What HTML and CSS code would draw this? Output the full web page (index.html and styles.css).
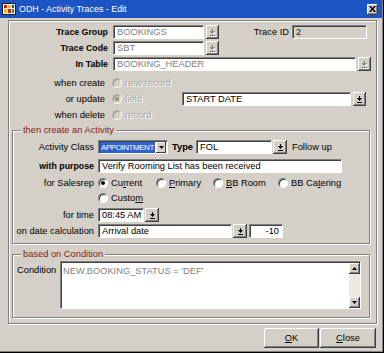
FILE: index.html
```html
<!DOCTYPE html>
<html lang="en">

<head>
    <meta charset="UTF-8">
    <title>ODH - Activity Traces - Edit</title>
    <link rel="stylesheet" href="styles.css">
</head>

<body>
    <div class="window">
        <div class="titlebar">
            <svg class="appicon" width="14" height="14" viewBox="0 0 14 14">
                <rect x="0.5" y="1.5" width="13" height="11" fill="#f4f0e0" stroke="#202020"/>
                <rect x="2" y="3" width="3" height="3" fill="#d02020"/>
                <rect x="6" y="3" width="3" height="3" fill="#f0c020"/>
                <rect x="10" y="3" width="2" height="3" fill="#2040a0"/>
                <rect x="2" y="7" width="3" height="4" fill="#f0c020"/>
                <rect x="6" y="7" width="3" height="4" fill="#d02020"/>
                <rect x="10" y="7" width="2" height="4" fill="#30a030"/>
            </svg>
            <span class="title">ODH - Activity Traces - Edit</span>
            <span class="close-btn">
                <svg width="7" height="6" viewBox="0 0 7 6"><path d="M0 0h2l1.5 2L5 0h2L4.5 3 7 6H5L3.5 4 2 6H0l2.5-3z"/></svg>
            </span>
        </div>

        <div class="frame">
            <div class="row">
                <span class="lbl bold">Trace Group</span>
                <span class="field dis w-code">BOOKINGS</span>
                <span class="dd dis"><svg class="ico" viewBox="0 0 7 7"><path d="M3 0h1v2h2L3.5 5 1 2h2z"/><rect x="1" y="6" width="5" height="1"/></svg></span>
                <span class="lbl-id">Trace ID</span>
                <span class="field ro w-id">2</span>
            </div>
            <div class="row gap2">
                <span class="lbl bold">Trace Code</span>
                <span class="field dis w-code">SBT</span>
                <span class="dd dis"><svg class="ico" viewBox="0 0 7 7"><path d="M3 0h1v2h2L3.5 5 1 2h2z"/><rect x="1" y="6" width="5" height="1"/></svg></span>
            </div>
            <div class="row gap2">
                <span class="lbl bold">In Table</span>
                <span class="field dis w-table">BOOKING_HEADER</span>
                <span class="dd dis"><svg class="ico" viewBox="0 0 7 7"><path d="M3 0h1v2h2L3.5 5 1 2h2z"/><rect x="1" y="6" width="5" height="1"/></svg></span>
            </div>

            <div class="row gap5">
                <span class="lbl thin">when create</span>
                <span class="radio off"></span>
                <span class="rtext off">new record</span>
            </div>
            <div class="row gap2">
                <span class="lbl thin">or update</span>
                <span class="radio off on"></span>
                <span class="rtext off w-fieldtxt">field</span>
                <span class="field w-start">START DATE</span>
                <span class="dd"><svg class="ico" viewBox="0 0 7 7"><path d="M3 0h1v2h2L3.5 5 1 2h2z"/><rect x="1" y="6" width="5" height="1"/></svg></span>
            </div>
            <div class="row gap2">
                <span class="lbl thin">when delete</span>
                <span class="radio off"></span>
                <span class="rtext off">record</span>
            </div>

            <fieldset class="group first">
                <legend>then create an Activity</legend>
                <div class="row">
                    <span class="glbl">Activity Class</span>
                    <span class="combo">
                        <span class="sel">APPOINTMENT</span>
                        <span class="combo-btn"><svg width="5" height="3" viewBox="0 0 5 3"><path d="M0 0h5L2.5 3z"/></svg></span>
                    </span>
                    <span class="type-lbl">Type</span>
                    <span class="field w-type">FOL</span>
                    <span class="dd wide"><svg class="ico" viewBox="0 0 7 7"><path d="M3 0h1v2h2L3.5 5 1 2h2z"/><rect x="1" y="6" width="5" height="1"/></svg></span>
                    <span class="follow">Follow up</span>
                </div>
                <div class="row gap5">
                    <span class="glbl bold">with purpose</span>
                    <span class="field w-purpose">Verify Rooming List has been received</span>
                </div>
                <div class="row gap3">
                    <span class="glbl">for Salesrep</span>
                    <span class="opt w-cur"><span class="radio on"></span>Cu<u>r</u>rent</span>
                    <span class="opt w-pri"><span class="radio"></span><u>P</u>rimary</span>
                    <span class="opt w-bbr"><span class="radio"></span><u>B</u>B Room</span>
                    <span class="opt"><span class="radio"></span>BB Ca<u>t</u>ering</span>
                </div>
                <div class="row gap1">
                    <span class="glbl"></span>
                    <span class="opt"><span class="radio"></span>Custo<u>m</u></span>
                </div>
                <div class="row gap3">
                    <span class="glbl">for time</span>
                    <span class="field w-time">08:45 AM</span>
                    <span class="dd wide"><svg class="ico" viewBox="0 0 7 7"><path d="M3 0h1v2h2L3.5 5 1 2h2z"/><rect x="1" y="6" width="5" height="1"/></svg></span>
                </div>
                <div class="row gap2">
                    <span class="glbl">on date calculation</span>
                    <span class="field w-date">Arrival date</span>
                    <span class="dd wide"><svg class="ico" viewBox="0 0 7 7"><path d="M3 0h1v2h2L3.5 5 1 2h2z"/><rect x="1" y="6" width="5" height="1"/></svg></span>
                    <span class="field w-days">-10</span>
                </div>
            </fieldset>

            <fieldset class="group second">
                <legend>based on Condition</legend>
                <div class="cond-row">
                    <span class="cond-lbl">Condition</span>
                    <div class="textarea">
                        <span class="cond-text">NEW.BOOKING_STATUS = 'DEF'</span>
                        <div class="scrollbar">
                            <span class="sb-btn"><svg width="5" height="3" viewBox="0 0 5 3"><path d="M2.5 0L5 3H0z"/></svg></span>
                            <span class="sb-track"></span>
                            <span class="sb-btn"><svg width="5" height="3" viewBox="0 0 5 3"><path d="M0 0h5L2.5 3z"/></svg></span>
                        </div>
                    </div>
                </div>
            </fieldset>
        </div>

        <div class="buttons">
            <span class="btn"><u>O</u>K</span>
            <span class="btn"><u>C</u>lose</span>
        </div>
    </div>
</body>

</html>
```

FILE: styles.css
```css
* {
    box-sizing: border-box;
}

body {
    margin: 0;
    font-family: "Liberation Sans", Arial, sans-serif;
    font-size: 9.3px;
    color: #000;
    background: #d4d0c8;
}

.window {
    width: 384px;
    height: 353px;
    background: #d4d0c8;
    box-shadow: inset -1px -1px #000, inset -2px -2px #808080;
    overflow: hidden;
}

.titlebar {
    width: 382px;
    height: 18px;
    background: #1d54c4;
    color: #fff;
    display: flex;
    align-items: center;
    padding: 0 4px 0 2px;
}

.appicon {
    flex: none;
    margin-right: 3px;
}

.title {
    flex: 1;
    font-size: 8.9px;
}

.close-btn {
    width: 11px;
    height: 11px;
    background: #d4d0c8;
    box-shadow: inset -1px -1px #404040, inset 1px 1px #fff, inset -2px -2px #808080;
    display: flex;
    align-items: center;
    justify-content: center;
}

/* outer etched frame */
.frame {
    margin: 2px 0 0 8px;
    width: 369px;
    height: 304px;
    border: 1px solid #808080;
    box-shadow: inset 1px 1px #fff, 1px 1px #fff;
    padding-top: 4px;
}

.row {
    display: flex;
    align-items: center;
    height: 14px;
    white-space: nowrap;
}

.gap1 { margin-top: 1px; }
.gap2 { margin-top: 2px; }
.gap3 { margin-top: 3px; }
.gap5 { margin-top: 5px; }

.lbl {
    width: 99px;
    text-align: right;
    margin-right: 5px;
}

.lbl.thin {
    padding-right: 3px;
    margin-right: 4px;
}

.bold {
    font-weight: bold;
    font-size: 8.8px;
}

.field {
    height: 14px;
    background: #fff;
    border: 1px solid;
    border-color: #808080 #fff #fff #808080;
    box-shadow: inset 1px 1px #404040;
    padding: 1px 0 0 3px;
    line-height: 11px;
    overflow: hidden;
}

.field.dis {
    color: #808080;
}

.field.ro {
    background: #d4d0c8;
    color: #202020;
}

.w-code { width: 91px; }
.w-table { width: 243px; }
.w-id { width: 75px; }
.w-start { width: 169px; }
.w-type { width: 76px; }
.w-purpose { width: 244px; }
.w-time { width: 46px; }
.w-date { width: 134px; }

.w-days {
    width: 34px;
    text-align: right;
    padding-right: 3px;
    margin-left: 2px;
}

.dd {
    width: 13px;
    height: 14px;
    margin-left: 2px;
    background: #d4d0c8;
    box-shadow: inset -1px -1px #404040, inset 1px 1px #fff, inset -2px -2px #808080;
    display: flex;
    align-items: center;
    justify-content: center;
    color: #000;
}

.dd.wide {
    width: 14px;
    margin-left: 1px;
}

.dd.dis {
    color: #808080;
}

.ico {
    width: 7px;
    height: 7px;
    fill: currentColor;
}

.dd.dis .ico {
    filter: drop-shadow(1px 1px 0 #fff);
}

.lbl-id {
    width: 70px;
    text-align: right;
    margin-right: 3px;
}

/* radio buttons */
.radio {
    position: relative;
    flex: none;
    width: 10px;
    height: 10px;
    border-radius: 50%;
    background: #fff;
    border: 1px solid;
    border-color: #808080 #fff #fff #808080;
    box-shadow: inset 1px 1px #404040;
    margin-right: 3px;
}

.radio.off {
    background: #d4d0c8;
    border-color: #b8b4ac #fff #fff #b8b4ac;
    box-shadow: inset 1px 1px #a09c94;
}

.radio.on::after {
    content: "";
    position: absolute;
    left: 2px;
    top: 2px;
    width: 4px;
    height: 4px;
    border-radius: 50%;
    background: #000;
}

.radio.off.on::after {
    background: #908c84;
}

.rtext.off {
    color: #aca89f;
    text-shadow: 1px 1px #fff;
}

.w-fieldtxt {
    width: 57px;
}

/* group boxes */
.group {
    margin: 3px 0 0 3px;
    width: 358px;
    min-width: 0;
    border: 1px solid #808080;
    box-shadow: inset 1px 1px #fff, 1px 1px #fff;
    padding: 4px 0 5px 0;
}

.group legend {
    margin-left: 8px;
    padding: 0 2px;
    color: #8b1a1a;
    line-height: 11px;
    height: 11px;
    background: #d4d0c8;
}

.group.second {
    margin-top: 5px;
    padding: 1px 0 8px 0;
}

.glbl {
    width: 81px;
    text-align: right;
    margin-right: 4px;
}

.combo {
    display: flex;
    align-items: center;
    width: 70px;
    height: 14px;
    background: #fff;
    border: 1px solid;
    border-color: #808080 #fff #fff #808080;
    box-shadow: inset 1px 1px #404040;
    padding: 1px 1px 0 1px;
}

.sel {
    flex: 1;
    height: 11px;
    line-height: 11px;
    background: #2f62cf;
    color: #fff;
    padding-left: 1px;
    font-size: 8px;
    letter-spacing: -0.45px;
    overflow: hidden;
}

.combo-btn {
    width: 10px;
    height: 11px;
    margin-left: 1px;
    background: #d4d0c8;
    box-shadow: inset -1px -1px #404040, inset 1px 1px #fff;
    display: flex;
    align-items: center;
    justify-content: center;
}

.type-lbl {
    font-weight: bold;
    margin: 0 3px 0 4px;
}

.follow {
    margin-left: 5px;
}

.opt {
    display: flex;
    align-items: center;
}

.w-cur { width: 58px; }
.w-pri { width: 57px; }
.w-bbr { width: 65px; }

.cond-row {
    display: flex;
    align-items: flex-start;
}

.cond-lbl {
    width: 47px;
    padding: 4px 0 0 4px;
}

.textarea {
    display: flex;
    width: 301px;
    height: 48px;
    background: #fff;
    border: 1px solid;
    border-color: #808080 #fff #fff #808080;
    box-shadow: inset 1px 1px #404040;
}

.cond-text {
    flex: 1;
    color: #808080;
    padding: 4px 0 0 2px;
}

.scrollbar {
    width: 11px;
    display: flex;
    flex-direction: column;
    margin: 1px 0 0 0;
}

.sb-btn {
    height: 11px;
    background: #d4d0c8;
    box-shadow: inset -1px -1px #404040, inset 1px 1px #fff, inset -2px -2px #808080;
    display: flex;
    align-items: center;
    justify-content: center;
}

.sb-track {
    flex: 1;
    background: #ebe9df;
}

.buttons {
    display: flex;
    justify-content: flex-end;
    padding-right: 8px;
    margin-top: 4px;
}

.btn {
    height: 20px;
    width: 55px;
    display: flex;
    align-items: center;
    justify-content: center;
    background: #d4d0c8;
    box-shadow: inset -1px -1px #404040, inset 1px 1px #fff, inset -2px -2px #808080;
}

.btn + .btn {
    width: 56px;
    margin-left: 1px;
}
```
